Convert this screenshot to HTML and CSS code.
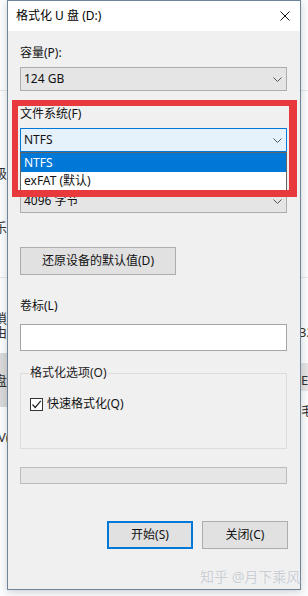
FILE: index.html
```html
<!DOCTYPE html>
<html lang="zh-CN">
<head>
<meta charset="utf-8">
<title>格式化 U 盘 (D:)</title>
<link rel="stylesheet" href="styles.css">
</head>
<body>
<div class="desktop">
  <div class="hline line-top"></div>
  <div class="hline line-mid"></div>
  <div class="band band-left"></div>
  <div class="band band-right"></div>
  <span class="ghost g1">级</span>
  <span class="ghost g2">乐</span>
  <span class="ghost g3">瑣</span>
  <span class="ghost g4">由</span>
  <span class="ghost g5">盘</span>
  <span class="ghost g6">V(</span>
  <span class="ghost g7">32</span>
  <span class="ghost g8">E:</span>
  <span class="ghost g9">毛</span>

  <div class="dialog">
    <div class="titlebar">
      <span class="title">格式化 U 盘 (D:)</span>
      <svg class="close" width="10" height="10" viewBox="0 0 10 10"><path d="M0.5 0.5 L9.5 9.5 M9.5 0.5 L0.5 9.5" stroke="#111" stroke-width="1" fill="none"/></svg>
    </div>
    <div class="content">
      <div class="field">
        <div class="label">容量(P):</div>
        <div class="combo"><span>124 GB</span><svg class="chev" width="9" height="5" viewBox="0 0 9 5"><path d="M0.5 0.5 L4.5 4.5 L8.5 0.5" stroke="#555" fill="none"/></svg></div>
      </div>
      <div class="field">
        <div class="label">文件系统(F)</div>
        <div class="combo focus"><span>NTFS</span><svg class="chev" width="9" height="5" viewBox="0 0 9 5"><path d="M0.5 0.5 L4.5 4.5 L8.5 0.5" stroke="#555" fill="none"/></svg></div>
      </div>
      <div class="field">
        <div class="label">分配单元大小(A)</div>
        <div class="combo"><span>4096 字节</span><svg class="chev" width="9" height="5" viewBox="0 0 9 5"><path d="M0.5 0.5 L4.5 4.5 L8.5 0.5" stroke="#555" fill="none"/></svg></div>
      </div>
      <button class="btn restore">还原设备的默认值(D)</button>
      <div class="field vol">
        <div class="label">卷标(L)</div>
        <div class="input"></div>
      </div>
      <fieldset class="group">
        <legend>格式化选项(O)</legend>
        <div class="check">
          <span class="box"><svg width="11" height="11" viewBox="0 0 11 11"><path d="M1.5 5.5 L4.2 8.5 L9.8 1.8" stroke="#222" stroke-width="1.2" fill="none"/></svg></span>
          <span>快速格式化(Q)</span>
        </div>
      </fieldset>
      <div class="progress"></div>
      <div class="actions">
        <button class="btn primary">开始(S)</button>
        <button class="btn">关闭(C)</button>
      </div>
    </div>
    <ul class="dropdown">
      <li class="selected">NTFS</li>
      <li>exFAT (默认)</li>
    </ul>
  </div>

  <div class="highlight"></div>
  <div class="watermark">知乎 @月下乘风</div>
</div>
</body>
</html>
```

FILE: styles.css
```css
* { box-sizing: border-box; }
html, body { margin: 0; padding: 0; }
body {
  width: 308px;
  height: 596px;
  overflow: hidden;
  background: #fbfcfd;
  font-family: "Noto Sans", "Noto Sans CJK SC", sans-serif;
  font-size: 12px;
  line-height: 16px;
  color: #111;
}
.desktop { position: relative; width: 308px; height: 596px; overflow: hidden; }

.hline { position: absolute; left: 0; width: 308px; height: 1px; background: #e4e6e8; }
.line-top { top: 90px; }
.line-mid { top: 277px; }
.band { position: absolute; background: #d9d9d9; }
.band-left { left: 0; width: 8px; top: 353px; height: 54px; }
.band-right { left: 300px; width: 8px; top: 363px; height: 28px; background: #e4e4e4; }
.ghost { position: absolute; font-size: 13px; line-height: 16px; color: #333; }
.g1 { left: -6px; top: 165px; }
.g2 { left: -6px; top: 219px; }
.g3 { left: -6px; top: 310px; }
.g4 { left: -6px; top: 324px; }
.g5 { left: -6px; top: 372px; }
.g6 { left: -2px; top: 429px; }
.g7 { left: 299px; top: 324px; }
.g8 { left: 301px; top: 372px; }
.g9 { left: 301px; top: 402px; }

.dialog {
  position: absolute;
  left: 7px;
  top: 0;
  width: 294px;
  height: 590px;
  border: 1px solid #6d8499;
  background: #f0f0f0;
  display: flex;
  flex-direction: column;
  box-shadow: 0 2px 8px rgba(0, 0, 0, 0.18);
}
.titlebar {
  height: 30px;
  background: #fff;
  display: flex;
  align-items: center;
  padding-left: 8px;
  flex: none;
}
.title { color: #000; }
.close { margin-left: auto; margin-right: 10px; }

.content {
  flex: 1;
  padding: 14px 13px 0 12px;
  display: flex;
  flex-direction: column;
}
.field { margin-bottom: 15px; }
.label { margin-bottom: 6px; color: #111; }
.combo {
  height: 24px;
  border: 1px solid #adadad;
  background: #e5e5e5;
  display: flex;
  align-items: center;
  padding: 0 4px 0 3px;
}
.combo span { flex: 1; }
.combo.focus { background: #e5f1fb; border-color: #0078d7; }
.field:nth-child(3) { margin-bottom: 0; }

.btn {
  font: inherit;
  color: #111;
  background: #e1e1e1;
  border: 1px solid #adadad;
  height: 28px;
  padding: 0;
  margin: 0;
}
.restore { width: 156px; margin-top: 34px; }
.vol { margin-top: 23px; margin-bottom: 0; }
.vol .label { margin-bottom: 10px; }
.input { height: 27px; background: #fff; border: 1px solid #a5a5a5; }

.group {
  margin: 14px 0 0 0;
  padding: 0 8px 36px 8px;
  border: 1px solid #dcdcdc;
  min-width: 0;
}
.group legend { padding: 0 1px; color: #222; }
.check { display: flex; align-items: center; gap: 4px; margin-top: 15px; margin-left: 1px; }
.box {
  width: 13px;
  height: 13px;
  border: 1px solid #333;
  background: #fff;
  display: flex;
  align-items: center;
  justify-content: center;
}

.progress {
  margin-top: 18px;
  height: 17px;
  background: #e6e6e6;
  border: 1px solid #bcbcbc;
}
.actions {
  margin-top: 37px;
  margin-right: -1px;
  display: flex;
  justify-content: flex-end;
  gap: 9px;
}
.actions .btn { width: 86px; }
.btn.primary { border: 2px solid #0078d7; }

.dropdown {
  position: absolute;
  left: 12px;
  top: 151px;
  width: 267px;
  height: 39px;
  margin: 0;
  padding: 0;
  list-style: none;
  background: #fff;
  border: 1px solid #646464;
}
.dropdown li { height: 18px; line-height: 18px; padding-left: 3px; color: #111; }
.dropdown li.selected { background: #0078d7; color: #fff; height: 19px; line-height: 19px; }

.highlight {
  position: absolute;
  left: 12px;
  top: 100px;
  width: 285px;
  height: 97px;
  border-style: solid;
  border-color: #e83a3c;
  border-width: 6px 8px 7px 6px;
}
.watermark {
  position: absolute;
  left: 200px;
  top: 569px;
  font-size: 14px;
  line-height: 16px;
  color: #c8ced4;
  text-shadow: 0 0 1px #fff;
  white-space: nowrap;
}
```
